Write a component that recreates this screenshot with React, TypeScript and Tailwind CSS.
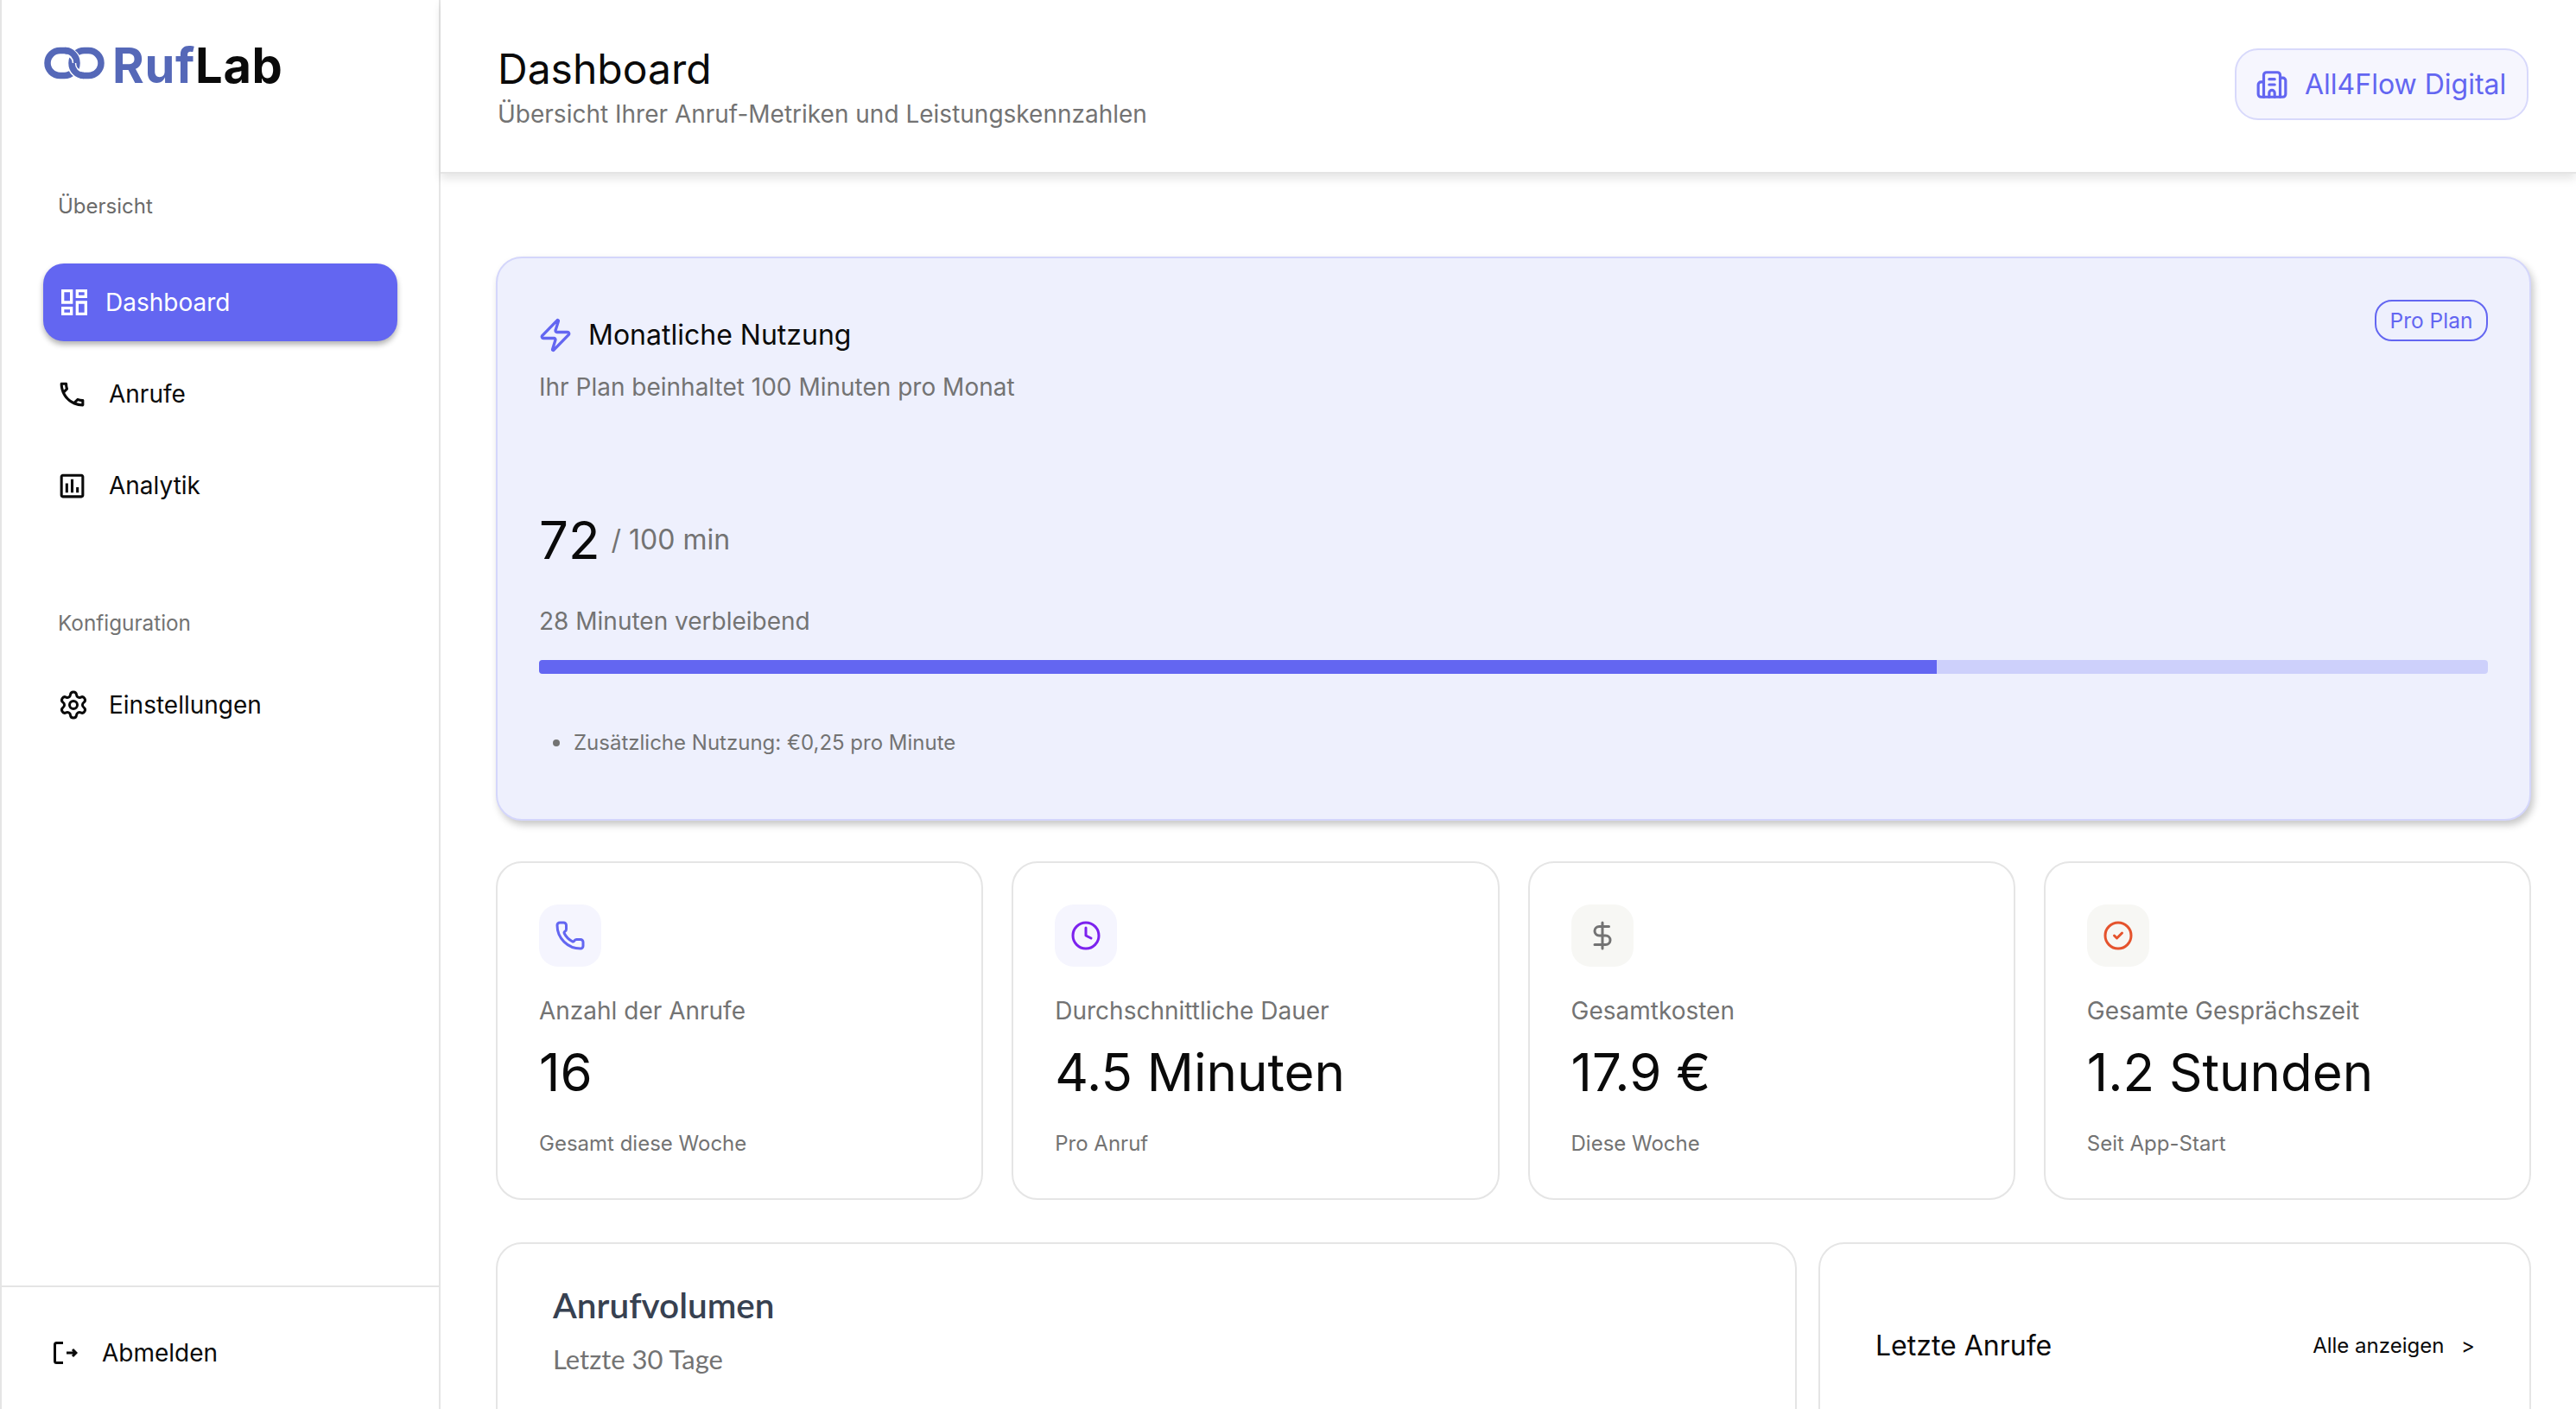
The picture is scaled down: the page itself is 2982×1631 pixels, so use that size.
import { Phone, Zap, Building2, Clock, DollarSign, CircleCheck, Settings } from 'lucide-react';
import { MdOutlineDashboard, MdOutlineCall, MdOutlineAssessment } from 'react-icons/md';

const stats = [
  { icon: Phone, box: 'bg-[#f5f5fe]', color: 'text-[#6366f1]', label: 'Anzahl der Anrufe', value: '16', sub: 'Gesamt diese Woche' },
  { icon: Clock, box: 'bg-[#f5f5fe]', color: 'text-[#7c22ee]', label: 'Durchschnittliche Dauer', value: '4.5 Minuten', sub: 'Pro Anruf' },
  { icon: DollarSign, box: 'bg-[#f7f7f4]', color: 'text-[#737373]', label: 'Gesamtkosten', value: '17.9 €', sub: 'Diese Woche' },
  { icon: CircleCheck, box: 'bg-[#f7f7f4]', color: 'text-[#e5532d]', label: 'Gesamte Gesprächszeit', value: '1.2 Stunden', sub: 'Seit App-Start' },
];

function LogoMark() {
  return (
    <svg viewBox="0 0 70 38" className="h-[38px] w-[70px] text-[#5568b8]" fill="none" stroke="currentColor" strokeWidth="7.5" strokeLinecap="round">
      <rect x="4" y="4.5" width="34" height="29" rx="14.5" />
      <rect x="32" y="4.5" width="34" height="29" rx="14.5" />
      {/* crossing in the middle, white under the band so the rings read as linked */}
      <path d="M28 6 C33 8 38 12 38 19" stroke="white" strokeWidth="10.5" strokeLinecap="butt" />
      <path d="M24 4.5 C32 4.5 38 11 38 19" strokeLinecap="butt" />
      <path d="M32 19 C32 26 36 31 42 32" stroke="white" strokeWidth="10.5" strokeLinecap="butt" />
      <path d="M32 19 C32 27 38 33.5 46 33.5" strokeLinecap="butt" />
    </svg>
  );
}

function LogoutIcon() {
  return (
    <svg viewBox="0 0 28 26" className="h-[26px] w-[28px] text-[#0a0a0a]" fill="none" stroke="currentColor" strokeWidth="3">
      <path d="M11 1.5 H3.5 C2.3 1.5 1.5 2.3 1.5 3.5 V22.5 C1.5 23.7 2.3 24.5 3.5 24.5 H11" />
      <path d="M15 13 H26 M22 9 L26 13 L22 17" />
    </svg>
  );
}

function NavItem({ icon, label }: { icon: React.ReactNode; label: string }) {
  return (
    <div className="flex h-[90px] items-center pl-[20px] text-[28px] text-[#0a0a0a]">
      <div className="flex w-[56px] justify-start">{icon}</div>
      <span>{label}</span>
    </div>
  );
}

export default function App() {
  return (
    <div className="flex h-[1631px] w-[2982px] overflow-hidden bg-white font-['Inter',sans-serif] text-[#0a0a0a]">
      <aside className="flex h-full w-[510px] shrink-0 flex-col border-x-2 border-[#e5e5e5] bg-white">
        <div className="flex h-[198px] items-start gap-[9px] pl-[49px] pt-[54px]">
          <LogoMark />
          <div className="text-[56px] font-bold leading-[44px] tracking-[0.7px]">
            <span className="text-[#5568b8]">Ruf</span>
            <span className="text-[#0a0a0a]">Lab</span>
          </div>
        </div>
        <div className="flex flex-1 flex-col">
          <div className="pl-[65px] pt-[23px] text-[24px] leading-[36px] text-[#6b6b6b]">Übersicht</div>
          <div className="mt-[48px] flex flex-col px-[48px]">
            <div className="flex h-[90px] w-[410px] items-center rounded-[24px] bg-[#6366f1] pl-[21px] text-[28px] text-white shadow-[0_4px_6px_rgba(0,0,0,0.3)]">
              <div className="w-[51px]"><MdOutlineDashboard size={40} className="-ml-[5px]" /></div>
              <span>Dashboard</span>
            </div>
            <div className="mt-[16px]">
              <NavItem icon={<MdOutlineCall size={37} className="-ml-[5px]" />} label="Anrufe" />
            </div>
            <div className="mt-[16px]">
              <NavItem icon={<MdOutlineAssessment size={37} className="-ml-[5px]" />} label="Analytik" />
            </div>
          </div>
          <div className="mt-[96px] pl-[65px] text-[24.3px] leading-[36px] text-[#737373]">Konfiguration</div>
          <div className="mt-[32px] px-[48px]">
            <NavItem icon={<Settings size={36} strokeWidth={2} className="-ml-[3px]" />} label="Einstellungen" />
          </div>
        </div>
        <div className="flex h-[143px] items-center border-t-2 border-[#e5e5e5] pl-[60px] pt-[10px] text-[28px]">
          <LogoutIcon />
          <span className="ml-[28px]">Abmelden</span>
        </div>
      </aside>

      <main className="flex min-w-0 flex-1 flex-col">
        <header className="z-10 flex h-[201px] shrink-0 items-center justify-between border-b-2 border-[#e5e5e5] bg-white pl-[66px] pr-[55px] shadow-[0_6px_10px_rgba(0,0,0,0.1)]">
          <div className="pt-[4px]">
            <h1 className="mb-[6px] text-[48px] leading-[54px]">Dashboard</h1>
            <p className="text-[28px] leading-[38px] text-[#737373]">Übersicht Ihrer Anruf-Metriken und Leistungskennzahlen</p>
          </div>
          <div className="mb-[4px] flex h-[83px] w-[340px] items-center gap-[19px] rounded-[27px] border-2 border-[#d8d9fb] bg-[#f6f6fe] pl-[22px] text-[32px] text-[#6366f1]">
            <Building2 size={38} strokeWidth={2} />
            <span>All4Flow Digital</span>
          </div>
        </header>

        <div className="flex-1 overflow-hidden pl-[64px] pr-[52px] pt-[96px]">
          <section className="h-[653px] rounded-[30px] border-2 border-[#d4d6fb] bg-[#eef0fd] px-[48px] pt-[67px] shadow-[3px_5px_8px_rgba(0,0,0,0.22)]">
            <div className="flex items-start justify-between">
              <div>
                <div className="flex items-center gap-[17px]">
                  <Zap size={42} strokeWidth={1.9} className="-ml-[2px] text-[#6366f1]" />
                  <span className="text-[32px] leading-[44px]">Monatliche Nutzung</span>
                </div>
                <p className="mt-[18px] text-[28px] leading-[40px] text-[#737373]">Ihr Plan beinhaltet 100 Minuten pro Monat</p>
              </div>
              <div className="-mt-[19px] flex h-[48px] w-[131px] items-center justify-center rounded-[20px] border-2 border-[#6366f1] text-[24.5px] text-[#6366f1]">Pro Plan</div>
            </div>
            <div className="mt-[121px] flex items-center">
              <span className="text-[60px] leading-[72px]">72</span>
              <span className="ml-[13px] text-[32px] text-[#737373]">/ 100 min</span>
            </div>
            <p className="pt-[38px] text-[28px] leading-[40px] text-[#737373]">28 Minuten verbleibend</p>
            <div className="mt-[25px] h-[16px] overflow-hidden rounded-[4px] bg-[#cdd0fb]">
              <div className="h-full w-[71.7%] bg-[#6366f1]" />
            </div>
            <ul className="mt-[62px] flex items-center pl-[16px] text-[24px] leading-[36px] text-[#737373]">
              <li className="mr-[16px] h-[8px] w-[8px] rounded-full bg-[#737373]" />
              <li>Zusätzliche Nutzung: €0,25 pro Minute</li>
            </ul>
          </section>

          <div className="mt-[47px] grid grid-cols-4 gap-[33px]">
            {stats.map((s) => (
              <div key={s.label} className="h-[392px] rounded-[30px] border-2 border-[#e5e5e5] bg-white px-[48px] pt-[48px]">
                <div className={`flex h-[72px] w-[72px] items-center justify-center rounded-[22px] ${s.box}`}>
                  <s.icon size={36} strokeWidth={2} className={s.color} />
                </div>
                <div className="mt-[32px] text-[28px] leading-[38px] text-[#737373]">{s.label}</div>
                <div className="mt-[16px] text-[60px] leading-[72px]">{s.value}</div>
                <div className="mt-[29px] text-[24px] leading-[36px] text-[#737373]">{s.sub}</div>
              </div>
            ))}
          </div>

          <div className="mt-[49px] grid grid-cols-[1506px_1fr] gap-[25px]">
            <div className="h-[300px] rounded-[30px] border-2 border-[#e5e5e5] bg-white px-[64px] pt-[48px]">
              <h2 className="font-['Lato',sans-serif] text-[40.5px] font-semibold leading-[46px] text-[#374151]">Anrufvolumen</h2>
              <p className="mt-[17px] font-['Lato',sans-serif] text-[31px] leading-[44px] text-[#737373]">Letzte 30 Tage</p>
            </div>
            <div className="h-[300px] rounded-[30px] border-2 border-[#e5e5e5] bg-white px-[64px] pt-[96px]">
              <div className="-mr-[1px] flex items-center justify-between">
                <span className="text-[32px] leading-[44px]">Letzte Anrufe</span>
                <span className="text-[24px] leading-[44px]">Alle anzeigen <span className="ml-[13px]">&gt;</span></span>
              </div>
            </div>
          </div>
        </div>
      </main>
    </div>
  );
}
